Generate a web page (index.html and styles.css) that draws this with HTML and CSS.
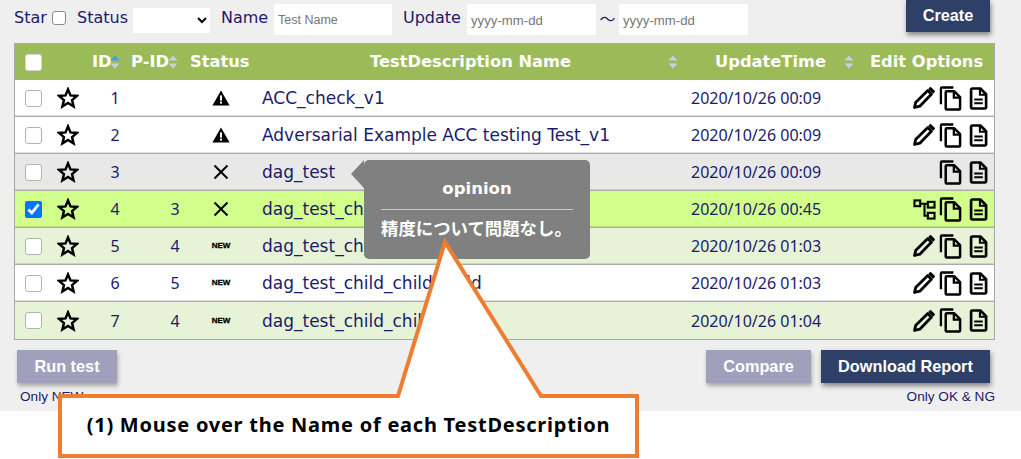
FILE: index.html
```html
<!DOCTYPE html>
<html lang="en">
<head>
<meta charset="utf-8">
<title>TestDescription list</title>
<link rel="stylesheet" href="styles.css">
</head>
<body>
<svg class="defs" width="0" height="0" aria-hidden="true">
  <defs>
    <symbol id="star" viewBox="0 0 24 24"><polygon points="12,2.6 14.7,9.2 21.8,9.7 16.4,14.3 18.1,21.2 12,17.5 5.9,21.2 7.6,14.3 2.2,9.7 9.3,9.2" fill="none" stroke="#000" stroke-width="2.700" stroke-linejoin="miter"/></symbol>
    <symbol id="warn" viewBox="0 0 18 16"><path d="M9 .5 17.6 15.5H.4Z" fill="#000"/><rect x="8" y="5.4" width="2" height="5.2" fill="#fff"/><rect x="8" y="11.6" width="2" height="2" fill="#fff"/></symbol>
    <symbol id="cross" viewBox="0 0 16 16"><path d="M1.5 1.5 14.5 14.5M14.5 1.5 1.5 14.5" stroke="#000" stroke-width="2" fill="none"/></symbol>
    <symbol id="pencil" viewBox="0 0 22 22"><path d="M1.500 20.500 2.800 15.200 14.800 3.600 18.400 7.200 6.800 19.200Z" fill="none" stroke="#000" stroke-width="2.800" stroke-linejoin="round"/><path d="M16.500 1.800 17.500 1 21 4.500 20.200 5.500Z" fill="#000" stroke="#000" stroke-width="1.800" stroke-linejoin="round"/></symbol>
    <symbol id="copy" viewBox="0 0 24 26"><path d="M2 19V2.500Q2 1.500 3 1.500H15" fill="none" stroke="#000" stroke-width="2.400"/><path d="M7 6.500Q7 5.500 8 5.500H16L22 11.500V23.500Q22 24.500 21 24.500H8Q7 24.500 7 23.500Z" fill="none" stroke="#000" stroke-width="2.600" stroke-linejoin="round"/><path d="M15.500 5.500V12H22" fill="none" stroke="#000" stroke-width="2.400"/></symbol>
    <symbol id="doc" viewBox="0 0 20 24"><path d="M2.200 3Q2.200 1.500 3.700 1.500H12L18 7.500V21Q18 22.500 16.500 22.500H3.700Q2.200 22.500 2.200 21Z" fill="none" stroke="#000" stroke-width="2.800" stroke-linejoin="round"/><path d="M11.500 1.500V8H18" fill="none" stroke="#000" stroke-width="2.200"/><path d="M5.500 13H14.500M5.500 17H14.500" stroke="#000" stroke-width="2.200" fill="none"/></symbol>
    <symbol id="tree" viewBox="0 0 24 22"><g fill="none" stroke="#000" stroke-width="2.200"><rect x="1.500" y="1.500" width="6" height="6"/><rect x="15.500" y="3" width="7" height="6"/><rect x="15.500" y="14.500" width="7" height="6"/><path d="M7.500 5H15.500M12 5V17.500H15.500"/></g></symbol>
    <symbol id="sort" viewBox="0 0 10 14"><path d="M5 0.500 9.500 5.500H0.500Z" fill="#c7d0e4"/><path d="M5 13.500 9.500 8.500H0.500Z" fill="#c7d0e4"/></symbol>
    <symbol id="sort-up" viewBox="0 0 10 14"><path d="M5 0.500 9.500 5.500H0.500Z" fill="#3f9bf5"/><path d="M5 13.500 9.500 8.500H0.500Z" fill="#c7d0e4"/></symbol>
  </defs>
</svg>

<div class="page">
  <form class="toolbar">
    <label class="lbl lbl-star">Star</label><input class="tool-check" type="checkbox">
    <label class="lbl lbl-status">Status</label>
    <select class="tool-select"><option></option></select>
    <label class="lbl lbl-name">Name</label>
    <input class="field field-name" type="text" placeholder="Test Name">
    <label class="lbl lbl-update">Update</label>
    <input class="field field-date" type="text" placeholder="yyyy-mm-dd">
    <span class="lbl tilde">～</span>
    <input class="field field-date" type="text" placeholder="yyyy-mm-dd">
    <button class="btn btn-dark btn-create" type="button">Create</button>
  </form>

  <div class="table">
    <div class="thead">
      <span class="th-check"><input class="head-check" type="checkbox"></span>
      <span></span>
      <span class="th th-id">ID<svg class="sort-over"><use href="#sort-up"/></svg></span>
      <span class="th th-pid">P-ID<svg class="sort-over"><use href="#sort"/></svg></span>
      <span class="th">Status</span>
      <span class="th th-title">TestDescription Name</span>
      <span class="th-sort"><svg class="sort"><use href="#sort"/></svg></span>
      <span class="th th-time">UpdateTime</span>
      <span class="th-sort"><svg class="sort"><use href="#sort"/></svg></span>
      <span class="th th-edit">Edit Options</span>
    </div>

    <div class="row">
      <span class="c"><input class="row-check" type="checkbox"></span>
      <span class="c"><svg class="i-star"><use href="#star"/></svg></span>
      <span class="c">1</span><span class="c"></span>
      <span class="c"><svg class="i-warn"><use href="#warn"/></svg></span>
      <span class="name">ACC_check_v1</span>
      <span class="time">2020/10/26 00:09</span>
      <span class="ops"><svg class="i-pencil"><use href="#pencil"/></svg><svg class="i-copy"><use href="#copy"/></svg><svg class="i-doc"><use href="#doc"/></svg></span>
    </div>
    <div class="row">
      <span class="c"><input class="row-check" type="checkbox"></span>
      <span class="c"><svg class="i-star"><use href="#star"/></svg></span>
      <span class="c">2</span><span class="c"></span>
      <span class="c"><svg class="i-warn"><use href="#warn"/></svg></span>
      <span class="name">Adversarial Example ACC testing Test_v1</span>
      <span class="time">2020/10/26 00:09</span>
      <span class="ops"><svg class="i-pencil"><use href="#pencil"/></svg><svg class="i-copy"><use href="#copy"/></svg><svg class="i-doc"><use href="#doc"/></svg></span>
    </div>
    <div class="row row-grey">
      <span class="c"><input class="row-check" type="checkbox"></span>
      <span class="c"><svg class="i-star"><use href="#star"/></svg></span>
      <span class="c">3</span><span class="c"></span>
      <span class="c"><svg class="i-cross"><use href="#cross"/></svg></span>
      <span class="name">dag_test</span>
      <span class="time">2020/10/26 00:09</span>
      <span class="ops"><svg class="i-copy"><use href="#copy"/></svg><svg class="i-doc"><use href="#doc"/></svg></span>
    </div>
    <div class="row row-selected">
      <span class="c"><input class="row-check" type="checkbox" checked></span>
      <span class="c"><svg class="i-star"><use href="#star"/></svg></span>
      <span class="c">4</span><span class="c">3</span>
      <span class="c"><svg class="i-cross"><use href="#cross"/></svg></span>
      <span class="name">dag_test_child</span>
      <span class="time">2020/10/26 00:45</span>
      <span class="ops"><svg class="i-tree"><use href="#tree"/></svg><svg class="i-copy"><use href="#copy"/></svg><svg class="i-doc"><use href="#doc"/></svg></span>
    </div>
    <div class="row row-green">
      <span class="c"><input class="row-check" type="checkbox"></span>
      <span class="c"><svg class="i-star"><use href="#star"/></svg></span>
      <span class="c">5</span><span class="c">4</span>
      <span class="c new">NEW</span>
      <span class="name">dag_test_child_child</span>
      <span class="time">2020/10/26 01:03</span>
      <span class="ops"><svg class="i-pencil"><use href="#pencil"/></svg><svg class="i-copy"><use href="#copy"/></svg><svg class="i-doc"><use href="#doc"/></svg></span>
    </div>
    <div class="row">
      <span class="c"><input class="row-check" type="checkbox"></span>
      <span class="c"><svg class="i-star"><use href="#star"/></svg></span>
      <span class="c">6</span><span class="c">5</span>
      <span class="c new">NEW</span>
      <span class="name">dag_test_child_child_child</span>
      <span class="time">2020/10/26 01:03</span>
      <span class="ops"><svg class="i-pencil"><use href="#pencil"/></svg><svg class="i-copy"><use href="#copy"/></svg><svg class="i-doc"><use href="#doc"/></svg></span>
    </div>
    <div class="row row-green">
      <span class="c"><input class="row-check" type="checkbox"></span>
      <span class="c"><svg class="i-star"><use href="#star"/></svg></span>
      <span class="c">7</span><span class="c">4</span>
      <span class="c new">NEW</span>
      <span class="name">dag_test_child_child</span>
      <span class="time">2020/10/26 01:04</span>
      <span class="ops"><svg class="i-pencil"><use href="#pencil"/></svg><svg class="i-copy"><use href="#copy"/></svg><svg class="i-doc"><use href="#doc"/></svg></span>
    </div>
  </div>

  <div class="actions">
    <button class="btn btn-muted btn-run" type="button">Run test</button>
    <button class="btn btn-muted btn-compare" type="button">Compare</button>
    <button class="btn btn-dark btn-report" type="button">Download Report</button>
  </div>
  <div class="notes">
    <span>Only NEW</span>
    <span>Only OK &amp; NG</span>
  </div>
</div>

<div class="tooltip">
  <div class="tooltip-title">opinion</div>
  <div class="tooltip-body">精度について問題なし。</div>
</div>

<svg class="callout-shape" width="1021" height="459" aria-hidden="true">
  <path d="M60 396H398L445 242 541 396H637V456H60Z" fill="#fff" stroke="#ed7d31" stroke-width="4" stroke-linejoin="miter"/>
</svg>
<div class="callout-label">(1) Mouse over the Name of each TestDescription</div>
</body>
</html>
```
FILE: styles.css
```css
* { box-sizing: border-box; }
html, body { margin: 0; padding: 0; }
body {
  position: relative;
  width: 1021px;
  height: 459px;
  overflow: hidden;
  background: #fff;
  font-family: "Noto Sans", "Liberation Sans", sans-serif;
  color: #1b1b6b;
}
.defs { position: absolute; }
.page {
  height: 411px;
  background: #efefef;
  padding: 0 26px 0 14px;
  overflow: hidden;
}

/* toolbar */
.toolbar {
  display: flex;
  align-items: flex-start;
  height: 43px;
}
.lbl {
  font-family: "DejaVu Sans", sans-serif;
  font-size: 16px;
  line-height: 22px;
  margin-top: 7px;
  white-space: nowrap;
}
.lbl-star { width: 38px; }
.lbl-status { width: 53px; margin-left: 11px; }
.lbl-name { width: 50px; margin-left: 11px; }
.lbl-update { width: 60px; margin-left: 11px; }
.tilde { width: 23px; text-align: center; font-family: "Noto Sans CJK JP", sans-serif; }
.tool-check {
  width: 14px; height: 14px;
  margin: 11px 0 0 0;
  appearance: none;
  background: #fff;
  border: 1px solid #8a8a8a;
  border-radius: 3px;
}
.tool-select {
  width: 77px; height: 25px;
  margin: 8px 0 0 3px;
  border: 0;
  background-color: #fff;
  font-size: 13px;
}
.field {
  height: 31px;
  margin: 4px 0 0 4px;
  padding: 1px 4px 0;
  border: 0;
  background: #fff;
  font-family: "Liberation Sans", sans-serif;
  font-size: 13.200px;
}
.field::placeholder { color: #777; opacity: 1; }
.field-name { width: 118px; margin-left: 3px; font-size: 12.500px; }
.field-date { width: 129px; }
.tilde + .field-date { margin-left: 0; }

.btn {
  border: 0;
  color: #fff;
  font-family: "Liberation Sans", sans-serif;
  font-weight: 700;
  font-size: 16.300px;
  padding: 0;
}
.btn-dark { background: #2e4068; box-shadow: 1px 3px 5px rgba(0,0,0,.45); }
.btn-muted { background: #a0a0bc; box-shadow: 1px 3px 4px rgba(0,0,0,.3); }
.btn-create { width: 84px; height: 32px; margin-left: auto; margin-right: 5px; padding-bottom: 2px; }

/* table */
.table { width: 981px; border: 1px solid #a8a8a8; border-top: 0; }
.thead, .row { display: grid; align-items: center; }
.thead {
  grid-template-columns: 37px 40px 39px 59px 72px 403px 16px 158px 20px 1fr;
  height: 37px;
  background: #9bbb59;
  color: #fff;
  border-top: 1px solid #a8a8a8;
}
.th {
  font-family: "DejaVu Sans", sans-serif;
  font-size: 16.300px;
  font-weight: 700;
  line-height: 22px;
  white-space: nowrap;
  position: relative;
}
.th-title { text-align: center; padding-left: 14px; }
.th-time { padding-left: 34px; }
.th-edit { padding-left: 11px; }
.th-check { display: flex; justify-content: center; }
.th-sort { display: flex; justify-content: center; }
.sort { width: 10px; height: 14px; display: block; }
.sort-over { position: absolute; width: 10px; height: 14px; top: 4px; }
.th-id .sort-over { left: 18px; }
.th-pid .sort-over { left: 37px; }
.head-check {
  appearance: none;
  width: 17px; height: 17px;
  margin: 0;
  background: #fff;
  border-radius: 3px;
  border: 1px solid #d8d8d8;
}

.row {
  grid-template-columns: 36px 34px 60px 60px 32px 454px 1fr auto;
  height: 37px;
  background: #fff;
  border-bottom: 1px solid #ababab;
  box-shadow: inset 0 -1px 0 rgba(0,0,0,.12);
  font-size: 16px;
  line-height: 22px;
}
.row:last-child { border-bottom: 0; box-shadow: none; }
.row-grey { background: #e8e8e8; }
.row-selected { background: #d2fe8c; }
.row-green { background: #e6f3d6; }
.c { display: flex; justify-content: center; align-items: center; }
.row-check {
  width: 17px; height: 17px;
  margin: 0;
  accent-color: #0075ff;
}
.row-check:not(:checked) {
  appearance: none;
  background: #fff;
  border: 1px solid #b4b4b4;
  border-radius: 3px;
}
.i-star { width: 22px; height: 22px; }
.i-warn { width: 18px; height: 16px; }
.i-cross { width: 16px; height: 16px; }
.new { font-family: "Liberation Sans", sans-serif; font-size: 8px; font-weight: 700; color: #000; -webkit-text-stroke: .3px #000; }
.name { padding-left: 25px; white-space: nowrap; font-family: "DejaVu Sans", sans-serif; font-size: 17px; }
.time { white-space: nowrap; }
.ops { display: flex; align-items: center; justify-content: flex-end; padding-right: 6px; }
.ops svg { display: block; }
.i-pencil { width: 22px; height: 22px; margin-right: 4px; }
.i-tree { width: 23px; height: 21px; margin-right: 3px; }
.i-copy { width: 23px; height: 25px; margin-right: 7px; }
.i-doc { width: 19px; height: 23px; }

/* actions */
.actions { display: flex; margin-top: 10px; padding-right: 5px; width: 981px; }
.actions .btn { height: 33px; }
.btn-run { width: 100px; margin-left: 3px; margin-right: auto; }
.btn-compare { width: 105px; margin-right: 10px; }
.btn-report { width: 169px; }
.notes {
  display: flex;
  justify-content: space-between;
  width: 981px;
  padding-left: 6px;
  margin-top: 5px;
  font-family: "Liberation Sans", sans-serif;
  font-size: 13.600px;
  line-height: 18px;
}

/* overlays */
.tooltip {
  position: absolute;
  left: 364px; top: 160px;
  width: 226px; height: 99px;
  padding: 17px 17px 0;
  background: #808080;
  border-radius: 5px;
  color: #fff;
  font-weight: 700;
}
.tooltip::before {
  content: "";
  position: absolute;
  left: -13px; top: 0;
  border-style: solid;
  border-width: 14px 13px 14px 0;
  border-color: transparent #808080 transparent transparent;
}
.tooltip-title {
  font-family: "DejaVu Sans", sans-serif;
  font-size: 16.500px;
  line-height: 24px;
  text-align: center;
  padding-bottom: 8px;
  border-bottom: 1px solid #c8c8c8;
}
.tooltip-body {
  margin-top: 6px;
  font-family: "Noto Sans CJK JP", sans-serif;
  font-size: 17.400px;
  line-height: 24px;
  white-space: nowrap;
}
.callout-shape { position: absolute; left: 0; top: 0; }
.callout-label {
  position: absolute;
  left: 58px; top: 394px;
  width: 581px; height: 63px;
  padding-bottom: 2px;
  display: flex;
  align-items: center;
  justify-content: center;
  color: #000;
  font-size: 20px;
  letter-spacing: .75px;
  font-weight: 700;
  white-space: nowrap;
}
```
